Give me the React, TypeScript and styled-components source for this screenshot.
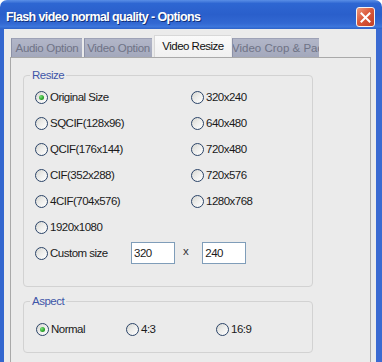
import React from "react";
import styled, { createGlobalStyle } from "styled-components";

const GlobalStyle = createGlobalStyle`
  html, body { margin: 0; padding: 0; background: #ffffff; }
  * { box-sizing: border-box; }
  body { font-family: "Liberation Sans", Arial, sans-serif; }
`;

const Window = styled.div`
  width: 382px;
  height: 362px;
  overflow: hidden;
  display: flex;
  flex-direction: column;
  font-family: "Liberation Sans", Arial, sans-serif;
  font-size: 11.5px;
  letter-spacing: -0.5px;
  color: #1a1a1a;
`;

const TitleBar = styled.div`
  height: 29px;
  flex: none;
  display: flex;
  align-items: center;
  justify-content: space-between;
  padding: 5px 7px 0 6px;
  border-radius: 7px 7px 0 0;
  background: linear-gradient(
    to bottom,
    #5a8ee6 0%,
    #2e66d2 12%,
    #2a5fcb 50%,
    #3268d2 80%,
    #3d76dc 92%,
    #2d62c8 100%
  );
`;

const Title = styled.span`
  color: #ffffff;
  font-weight: bold;
  font-size: 12.5px;
  letter-spacing: -0.6px;
  text-shadow: 1px 1px 0 #10307a;
`;

const CloseButton = styled.div`
  width: 19px;
  height: 20px;
  border: 1px solid #f4f4f4;
  border-radius: 3px;
  display: flex;
  align-items: center;
  justify-content: center;
  background: linear-gradient(135deg, #ee9a7c 0%, #db5a3c 45%, #c23f25 100%);
`;

const Frame = styled.div`
  flex: 1;
  display: flex;
  border-left: 4px solid #3366cf;
  border-right: 6px solid #3a6ad2;
  min-height: 0;
`;

const Client = styled.div`
  flex: 1;
  display: flex;
  flex-direction: column;
  background: #ebebeb;
  padding: 6px 5px 0 6px;
  min-width: 0;
`;

const TabStrip = styled.div`
  display: flex;
  align-items: flex-end;
  margin-left: 1px;
  height: 22px;
  flex: none;
`;

const Tab = styled.div<{ $active?: boolean; $w: number; $clip?: boolean }>`
  flex: 0 0 ${(p) => p.$w}px;
  height: ${(p) => (p.$active ? 22 : 19)}px;
  margin-right: ${(p) => (p.$active ? 1 : 2)}px;
  display: flex;
  align-items: center;
  justify-content: ${(p) => (p.$clip ? "flex-start" : "center")};
  padding-bottom: ${(p) => (p.$active ? 2 : 0)}px;
  white-space: nowrap;
  overflow: hidden;
  letter-spacing: ${(p) => (p.$active ? -0.5 : -0.3)}px;
  color: ${(p) => (p.$active ? "#111111" : "#6f7386")};
  background: ${(p) =>
    p.$active
      ? "linear-gradient(to bottom, #fafafa, #f0f0f0)"
      : "linear-gradient(to bottom, #b2b6c8, #a3a8bc)"};
  border-left: 1px solid ${(p) => (p.$active ? "#d8d8d8" : "#8d92a8")};
  border-top: 1px solid ${(p) => (p.$active ? "#d8d8d8" : "#9ea2b6")};
`;

const TabText = styled.span<{ $shift?: number }>`
  flex: none;
  margin-left: ${(p) => p.$shift ?? 0}px;
  letter-spacing: 0;
`;

const TabPanel = styled.div`
  flex: 1;
  border: 1px solid #a9a9a9;
  border-bottom: none;
  background: #ebebeb;
  padding: 11px 0 0 12px;
  display: flex;
  flex-direction: column;
`;

const GroupBox = styled.fieldset<{ $gap?: number }>`
  margin: ${(p) => p.$gap ?? 0}px 0 0 0;
  padding: 0;
  width: 290px;
  border: 1px solid #d2d2d2;
  border-radius: 4px;
  min-width: 0;
`;

const Legend = styled.legend`
  margin-left: 6px;
  padding: 0 2px;
  line-height: 13px;
  color: #3f56a8;
`;

const ResizeGrid = styled.div`
  display: grid;
  grid-template-columns: 156px 1fr;
  grid-auto-rows: 26px;
  padding: 2px 0 20px 11px;
`;

const AspectRow = styled.div`
  display: grid;
  grid-template-columns: 90px 90px 90px;
  grid-auto-rows: 26px;
  padding: 8px 0 10px 12px;
`;

const Option = styled.label`
  display: flex;
  align-items: center;
  gap: 2px;
  white-space: nowrap;
`;

const Circle = styled.span<{ $checked?: boolean }>`
  width: 13px;
  height: 13px;
  flex: none;
  border-radius: 50%;
  border: 1px solid #2b4468;
  background: linear-gradient(135deg, #d6d6cf 0%, #ececea 45%, #ffffff 100%);
  display: flex;
  align-items: center;
  justify-content: center;
  &::after {
    content: "";
    display: ${(p) => (p.$checked ? "block" : "none")};
    width: 5px;
    height: 5px;
    border-radius: 50%;
    background: radial-gradient(circle at 35% 35%, #7ce07c 0%, #2aa42a 60%, #1d7d1d 100%);
  }
`;

const CustomRow = styled.div`
  grid-column: 1 / -1;
  display: flex;
  align-items: center;
`;

const CustomLabel = styled(Option)`
  width: 96px;
`;

const SizeInput = styled.div`
  width: 44px;
  height: 22px;
  background: #ffffff;
  border: 1px solid #7f9db9;
  padding: 4px 0 0 2px;
  line-height: 13px;
`;

const Times = styled.span`
  margin: 0 14px 5px 8px;
  color: #333333;
`;

const Radio = ({ label, checked }: { label: string; checked?: boolean }) => (
  <Option>
    <Circle $checked={checked} />
    <span>{label}</span>
  </Option>
);

export default function App() {
  return (
    <>
      <GlobalStyle />
      <Window>
        <TitleBar>
          <Title>Flash video normal quality - Options</Title>
          <CloseButton>
            <svg width="11" height="11" viewBox="0 0 11 11">
              <path d="M1.5 1.5 L9.5 9.5 M9.5 1.5 L1.5 9.5" stroke="#ffffff" strokeWidth="2" strokeLinecap="square" />
            </svg>
          </CloseButton>
        </TitleBar>
        <Frame>
          <Client>
            <TabStrip>
              <Tab $w={71}>Audio Option</Tab>
              <Tab $w={68}>Video Option</Tab>
              <Tab $w={77} $active>Video Resize</Tab>
              <Tab $w={87} $clip>
                <TabText $shift={-1}>Video Crop &amp; Pad</TabText>
              </Tab>
            </TabStrip>
            <TabPanel>
              <GroupBox>
                <Legend>Resize</Legend>
                <ResizeGrid>
                  <Radio label="Original Size" checked />
                  <Radio label="320x240" />
                  <Radio label="SQCIF(128x96)" />
                  <Radio label="640x480" />
                  <Radio label="QCIF(176x144)" />
                  <Radio label="720x480" />
                  <Radio label="CIF(352x288)" />
                  <Radio label="720x576" />
                  <Radio label="4CIF(704x576)" />
                  <Radio label="1280x768" />
                  <Radio label="1920x1080" />
                  <span />
                  <CustomRow>
                    <CustomLabel>
                      <Circle />
                      <span>Custom size</span>
                    </CustomLabel>
                    <SizeInput>320</SizeInput>
                    <Times>x</Times>
                    <SizeInput>240</SizeInput>
                  </CustomRow>
                </ResizeGrid>
              </GroupBox>
              <GroupBox $gap={8}>
                <Legend>Aspect</Legend>
                <AspectRow>
                  <Radio label="Normal" checked />
                  <Radio label="4:3" />
                  <Radio label="16:9" />
                </AspectRow>
              </GroupBox>
            </TabPanel>
          </Client>
        </Frame>
      </Window>
    </>
  );
}
